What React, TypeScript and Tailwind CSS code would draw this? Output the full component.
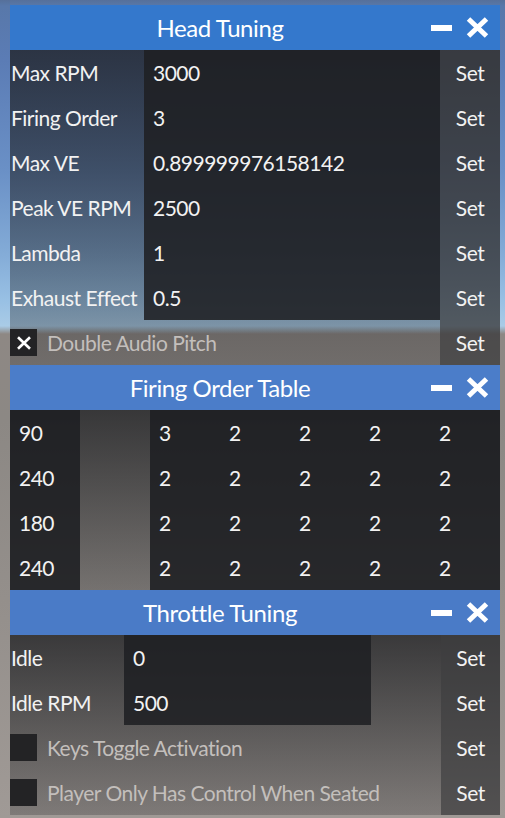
import type { ReactNode } from "react";

function CloseIcon({ size = 23, stroke = 5 }: { size?: number; stroke?: number }) {
  return (
    <svg width={size} height={size - 2} viewBox="0 0 23 21" className="block">
      <path d="M2.5 2 L20.5 19 M20.5 2 L2.5 19" stroke="white" strokeWidth={stroke} />
    </svg>
  );
}

function Panel({
  title,
  headerClass,
  children,
}: {
  title: string;
  headerClass: string;
  children: ReactNode;
}) {
  return (
    <div className="w-[490px]">
      <div className={`flex h-[45px] items-center ${headerClass}`}>
        <div className="w-[420px] pt-px text-center text-[24px] tracking-[-0.4px] text-white">{title}</div>
        <div className="ml-px h-[6px] w-[21px] bg-white" />
        <div className="ml-[14px]">
          <CloseIcon />
        </div>
      </div>
      <div className="bg-linear-to-b from-[rgba(30,31,34,0.77)] to-[rgba(30,31,34,0.26)]">
        {children}
      </div>
    </div>
  );
}

function SetCell({ w = "w-[60px]" }: { w?: string }) {
  return (
    <div className={`flex h-full ${w} items-center justify-center bg-[rgba(62,62,64,0.68)] text-[#f2f2f2]`}>
      Set
    </div>
  );
}

function FieldRow({
  label,
  value,
  labelW,
  inputW,
  gapW,
  setW,
}: {
  label: string;
  value: string;
  labelW: string;
  inputW: string;
  gapW?: string;
  setW?: string;
}) {
  return (
    <div className="flex h-[45px] items-center">
      <div className={`${labelW} whitespace-nowrap pl-px text-[#f2f2f2]`}>{label}</div>
      <div className={`flex h-full ${inputW} items-center bg-[rgba(31,32,35,0.88)] pl-[9px] text-[#f2f2f2]`}>
        {value}
      </div>
      {gapW && <div className={gapW} />}
      <SetCell w={setW} />
    </div>
  );
}

function CheckRow({ label, checked, setW }: { label: string; checked?: boolean; setW?: string }) {
  return (
    <div className="flex h-[45px] items-center">
      <div className="flex h-[27px] w-[27px] items-center justify-center bg-[#232325]">
        {checked && <CloseIcon size={16} stroke={4} />}
      </div>
      <div className="ml-[10px] flex-1 whitespace-nowrap text-[#c3bfbc]">{label}</div>
      <SetCell w={setW} />
    </div>
  );
}

const HEAD = [
  ["Max RPM", "3000"],
  ["Firing Order", "3"],
  ["Max VE", "0.899999976158142"],
  ["Peak VE RPM", "2500"],
  ["Lambda", "1"],
  ["Exhaust Effect", "0.5"],
];

const FIRING: [string, string[]][] = [
  ["90", ["3", "2", "2", "2", "2"]],
  ["240", ["2", "2", "2", "2", "2"]],
  ["180", ["2", "2", "2", "2", "2"]],
  ["240", ["2", "2", "2", "2", "2"]],
];

export default function App() {
  return (
    <div className="h-[818px] w-[505px] overflow-hidden bg-[linear-gradient(to_bottom,#56709a_0px,#5878aa_6px,#5b7cb5_60px,#6a90c6_170px,#82aad6_250px,#98c0e4_300px,#a9cbe6_326px,#8e8884_334px,#8c8884_420px,#948f8b_600px,#a09a96_818px)] pt-[5px] pl-[10px] font-[family-name:Lato,sans-serif] text-[21px] leading-none tracking-[-0.5px]">
      <Panel title="Head Tuning" headerClass="bg-[#3478cc]">
        {HEAD.map(([label, value]) => (
          <FieldRow key={label} label={label} value={value} labelW="w-[134px]" inputW="w-[296px]" />
        ))}
        <CheckRow label="Double Audio Pitch" checked />
      </Panel>

      <Panel title="Firing Order Table" headerClass="bg-[#4b7dc9]">
        {FIRING.map(([deg, cells], i) => (
          <div key={i} className="flex h-[45px] items-center text-[#f2f2f2]">
            <div className="flex h-full w-[70px] items-center bg-[rgba(31,32,35,0.9)] pl-[9px]">{deg}</div>
            <div className="h-full w-[70px]" />
            <div className="flex h-full flex-1 bg-[rgba(31,32,35,0.9)]">
              {cells.map((c, j) => (
                <div key={j} className="flex h-full w-[70px] items-center pl-[9px]">
                  {c}
                </div>
              ))}
            </div>
          </div>
        ))}
      </Panel>

      <Panel title="Throttle Tuning" headerClass="bg-[#4a7bc7]">
        <FieldRow label="Idle" value="0" labelW="w-[114px]" inputW="w-[247px]" gapW="w-[70px]" setW="w-[59px]" />
        <FieldRow label="Idle RPM" value="500" labelW="w-[114px]" inputW="w-[247px]" gapW="w-[70px]" setW="w-[59px]" />
        <CheckRow label="Keys Toggle Activation" setW="w-[59px]" />
        <CheckRow label="Player Only Has Control When Seated" setW="w-[59px]" />
      </Panel>
    </div>
  );
}
